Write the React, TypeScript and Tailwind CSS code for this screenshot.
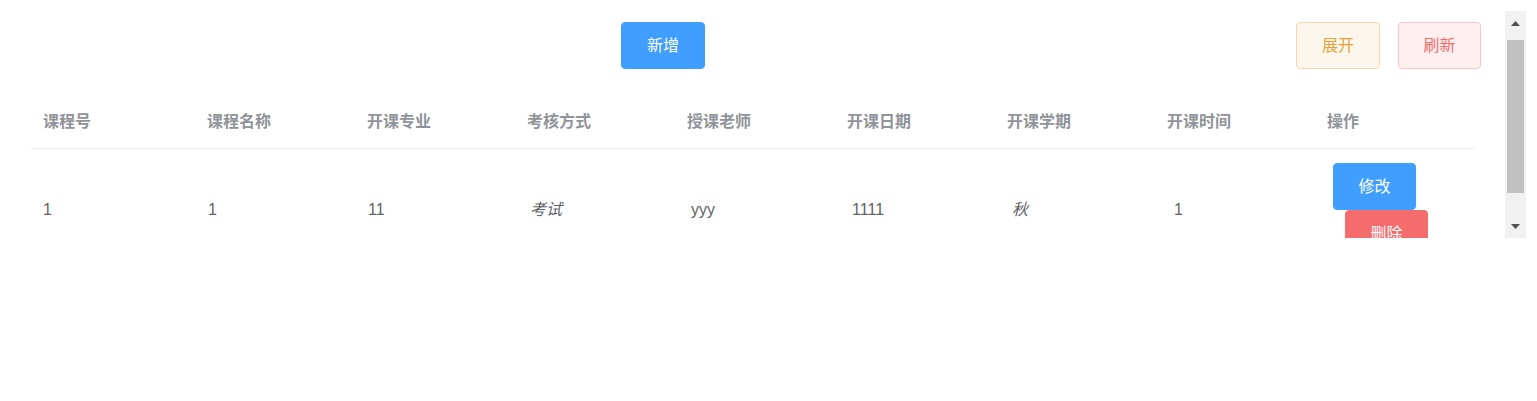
import React from "react";

const font = { fontFamily: '"Liberation Sans", "Noto Sans CJK SC", sans-serif' };

const headers = ["课程号", "课程名称", "开课专业", "考核方式", "授课老师", "开课日期", "开课学期", "开课时间", "操作"];

const row = [
  { text: "1", pad: "pl-[12px]" },
  { text: "1", pad: "pl-[13px]" },
  { text: "11", pad: "pl-[13px]" },
  { text: "考试", pad: "pl-[15px]", italic: true },
  { text: "yyy", pad: "pl-[16px]" },
  { text: "1111", pad: "pl-[17px]" },
  { text: "秋", pad: "pl-[17px]", italic: true },
  { text: "1", pad: "pl-[19px]" },
];

function Btn({ label, className }: { label: string; className: string }) {
  return (
    <button
      type="button"
      className={`flex h-[47px] items-center justify-center rounded-[4px] border text-[16px] ${className}`}
    >
      {label}
    </button>
  );
}

function ScrollBar() {
  return (
    <div className="flex h-[227px] w-[21px] flex-col bg-[#f1f1f1]">
      <div className="flex h-[24px] items-center justify-center">
        <svg width="9" height="5" viewBox="0 0 9 5">
          <polygon points="0,5 9,5 4.5,0" fill="#505050" />
        </svg>
      </div>
      <div className="mx-[2px] mt-[5px] h-[153px] bg-[#c1c1c1]" />
      <div className="flex-1" />
      <div className="flex h-[24px] items-center justify-center">
        <svg width="9" height="5" viewBox="0 0 9 5">
          <polygon points="0,0 9,0 4.5,5" fill="#505050" />
        </svg>
      </div>
    </div>
  );
}

export default function App() {
  return (
    <div className="h-[401px] w-[1537px] bg-white" style={font}>
      <div className="flex pt-[11px]">
        <div className="h-[227px] w-[1505px] overflow-hidden">
          <div className="flex items-start pt-[11px] pr-[24px] pl-[621px]">
            <Btn label="新增" className="w-[84px] border-[#409eff] bg-[#409eff] text-white" />
            <Btn label="展开" className="ml-auto w-[84px] border-[#f5dab1] bg-[#fdf6ec] text-[#e6a23c]" />
            <Btn label="刷新" className="ml-[18px] w-[83px] border-[#fbc4c4] bg-[#fef0f0] text-[#f56c6c]" />
          </div>

          <div className="mt-[26px] ml-[31px] w-[1444px]">
            <div className="grid h-[54px] grid-cols-[164px_repeat(8,160px)] items-center border-b border-[#ebeef5]">
              {headers.map((h) => (
                <div key={h} className="pl-[12px] text-[16px] font-bold text-[#909399]">
                  {h}
                </div>
              ))}
            </div>

            <div className="grid grid-cols-[164px_repeat(8,160px)] items-center pt-[14px] pb-[12px] text-[16px] text-[#606266]">
              {row.map((c, i) => (
                <div key={i} className={`${c.pad} ${c.italic ? "italic" : ""}`}>
                  {c.text}
                </div>
              ))}
              <div className="flex flex-col items-start pl-[18px]">
                <Btn label="修改" className="w-[83px] border-[#409eff] bg-[#409eff] text-white" />
                <Btn label="删除" className="ml-[12px] w-[83px] border-[#f56c6c] bg-[#f56c6c] text-white" />
              </div>
            </div>
          </div>
        </div>
        <ScrollBar />
      </div>
    </div>
  );
}
